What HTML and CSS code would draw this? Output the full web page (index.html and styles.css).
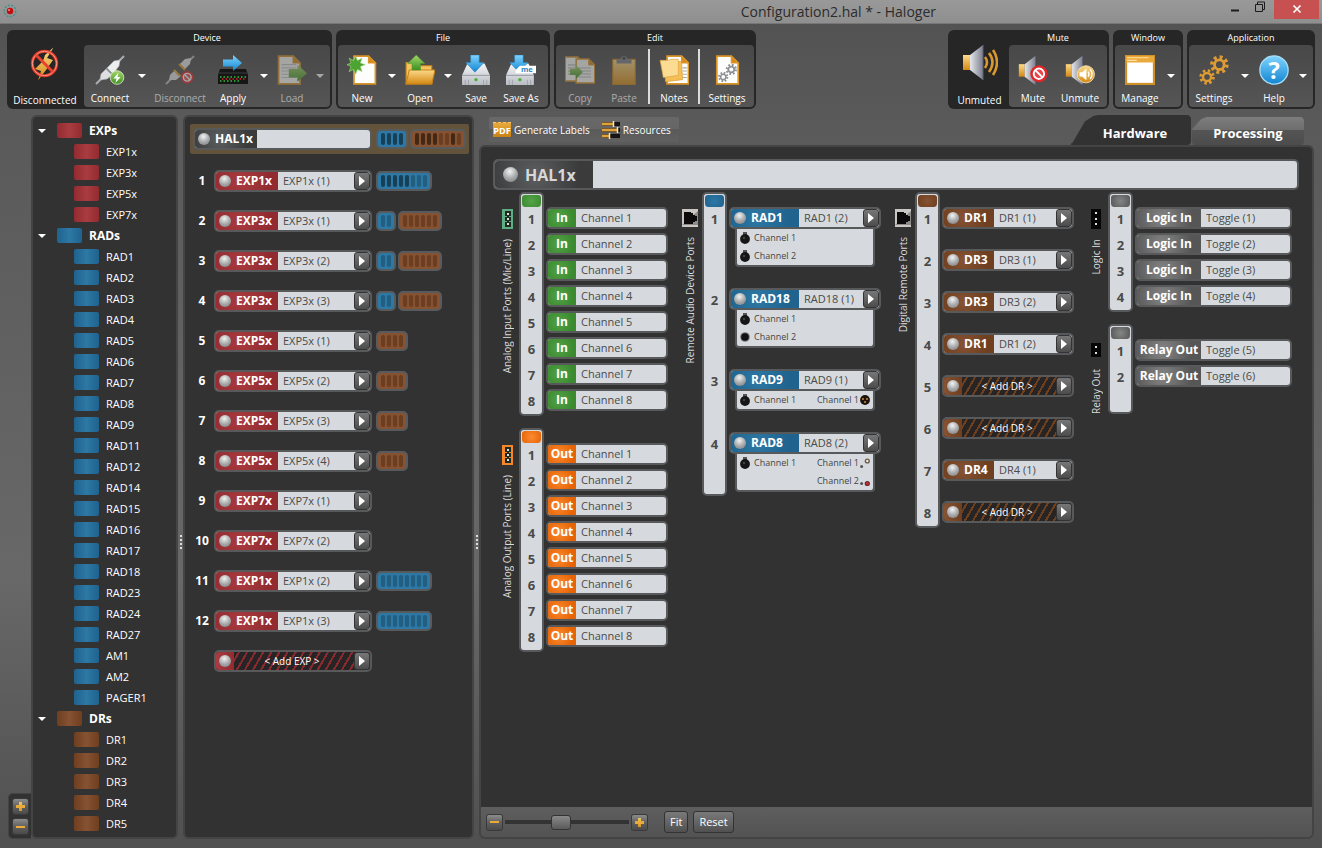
FILE: index.html
```html
<!DOCTYPE html>
<html lang="en">
<head>
<meta charset="utf-8">
<title>Configuration2.hal * - Haloger</title>
<link rel="stylesheet" href="styles.css">
</head>
<body>
<svg class="defs" width="0" height="0" aria-hidden="true">
  <defs>
    <linearGradient id="gBlue" x1="0" y1="0" x2="0" y2="1"><stop offset="0" stop-color="#7fd4ff"/><stop offset="1" stop-color="#1285d0"/></linearGradient>
    <linearGradient id="gGold" x1="0" y1="0" x2="0" y2="1"><stop offset="0" stop-color="#fbd98a"/><stop offset="1" stop-color="#d48a14"/></linearGradient>
    <linearGradient id="gGreen" x1="0" y1="0" x2="0" y2="1"><stop offset="0" stop-color="#a5d66b"/><stop offset="1" stop-color="#3f9022"/></linearGradient>
    <linearGradient id="gGrey" x1="0" y1="0" x2="1" y2="0"><stop offset="0" stop-color="#e6e7ec"/><stop offset="1" stop-color="#7b7e8c"/></linearGradient>
    <linearGradient id="gDrive" x1="0" y1="0" x2="0" y2="1"><stop offset="0" stop-color="#f4f5f7"/><stop offset="1" stop-color="#b9bdc4"/></linearGradient>
    <symbol id="doc" viewBox="0 0 28 28"><path d="M4.500 1H18l6.500 6.500V27H4.500z" fill="#fdfdfb" stroke="#d9942a" stroke-width="1.600"/><path d="M18 1v6.500h6.500z" fill="#d98a1a" stroke="#d9942a"/></symbol>
    <symbol id="no" viewBox="0 0 14 14"><circle cx="7" cy="7" r="6.600" fill="#e0262b"/><circle cx="7" cy="7" r="4" fill="#e8474a" stroke="#fff" stroke-width="1.500"/><path d="M4.200 4.200l5.600 5.600" stroke="#fff" stroke-width="1.500"/></symbol>
    <symbol id="gear" viewBox="0 0 16 16"><circle cx="8" cy="8" r="6.200" fill="none" stroke="currentColor" stroke-width="3" stroke-dasharray="2.430 2.440"/><circle cx="8" cy="8" r="4" fill="none" stroke="currentColor" stroke-width="2.400"/></symbol>
    <symbol id="off" viewBox="0 0 36 36"><path d="M26.500 1.500L20 12l6 2-7 10-8 10.500L14 25l-6-2 8-8 2-6z" fill="url(#gGold)"/><circle cx="17.500" cy="17.500" r="12.200" fill="none" stroke="#e23a2a" stroke-width="3"/><circle cx="17.500" cy="17.500" r="12.200" fill="none" stroke="#ff9a88" stroke-width="1"/><path d="M9 9l17 17" stroke="#e8412f" stroke-width="3"/></symbol>
    <symbol id="plug" viewBox="0 0 30 30"><path d="M1 29l7-7M22 8l7-7" stroke="#a9adb0" stroke-width="2"/><path d="M5 25l1-6 5-5 6 6-5 4z" fill="#dcdee0" stroke="#b4b7ba" stroke-width=".6"/><path d="M12 13l7-7 6-1-1 6-6 8z" fill="#eceded" stroke="#b4b7ba" stroke-width=".6"/><path d="M11 13l7 7" stroke="#8a8e92" stroke-width="1.200"/></symbol>
    <symbol id="connect" viewBox="0 0 30 30"><use href="#plug"/><circle cx="22" cy="22.500" r="6.800" fill="url(#gGreen)" stroke="#e2f2d2" stroke-width=".8"/><path d="M23.500 17.500l-5 6h3l-1 4.500 5-6h-3z" fill="#fff"/></symbol>
    <symbol id="disconnect" viewBox="0 0 30 30"><path d="M1 29L8 22M22 8l7-7" stroke="#b5b8bb" stroke-width="2"/><path d="M4 25l1-5 5-5 6 6-5 4z" fill="#e4e5e7"/><path d="M15 9l5-5 6-1-1 6-5 5z" fill="#e9eaeb"/><path d="M9 15l6 6M14 9l6 6" stroke="#e2a030" stroke-width="2"/><use href="#no" x="15.500" y="15.500" width="13.500" height="13.500"/></symbol>
    <symbol id="apply" viewBox="0 0 30 30"><path d="M2 14h26l2 6v9H0v-9z" fill="#161616"/><path d="M0 18h30" stroke="#3a3a3a"/><path d="M2 22h26M2 26h20" stroke="#31c13b" stroke-width="1.500" stroke-dasharray="1.500 2"/><path d="M4 24h24" stroke="#d22" stroke-width="1.500" stroke-dasharray="1.500 2"/><path d="M5 4.500h10V0l9 8-9 8v-4.500H5z" fill="url(#gBlue)"/></symbol>
    <symbol id="load" viewBox="0 0 28 28"><use href="#doc" x="-3" width="28" height="28"/><path d="M4 9h14M4 12h14M4 15h14M4 18h14M4 21h14" stroke="#c9c9c9"/><path d="M11 13h8V9l9 8-9 8v-4h-8z" fill="url(#gGreen)"/></symbol>
    <symbol id="new" viewBox="0 0 28 28"><use href="#doc" x="2" width="28" height="28"/><path d="M8 1l1.800 4.200L14 3l-1.500 4.500L17 9l-4.500 1.800L14 15.500l-4.200-2L8 18l-1.800-4.500L2 15.500l1.800-4.700L0 9l3.800-1.500L2 3l4.200 2.200z" fill="#4da32f" stroke="#a3d87b" stroke-width=".6"/></symbol>
    <symbol id="open" viewBox="0 0 28 28"><path d="M1 27V7h7l3 3h14v17z" fill="#f3c462" stroke="#c98216"/><path d="M1 27l3-13h24l-3 13z" fill="url(#gGold)" stroke="#c98216"/><path d="M10.500 0l8 8h-4v6h-8V8h-4z" fill="url(#gGreen)" stroke="#4f9a30" stroke-width=".5"/></symbol>
    <symbol id="save" viewBox="0 0 28 28"><path d="M6 8h16l5 11v9H1v-9z" fill="url(#gDrive)"/><path d="M1 19h26" stroke="#9a9ea5"/><path d="M4 28v-5M7 28v-5M21 28v-5M24 28v-5" stroke="#a4a8ae"/><circle cx="14" cy="23" r="1.600" fill="#48b236"/><path d="M9 0h8v7h4.500L13 16 4.500 7H9z" fill="url(#gBlue)" stroke="#2c83bf" stroke-width=".5"/></symbol>
    <symbol id="saveas" viewBox="0 0 28 28"><use href="#save" width="28" height="28" x="-1"/><path d="M9 14l4-4h15v7H9z" fill="#fff"/><text x="14" y="16" class="tiny">me</text></symbol>
    <symbol id="copy" viewBox="0 0 30 28"><use href="#doc" x="-4" y="0" width="26" height="26"/><path d="M3 9h8M3 12h8M3 15h8M3 18h8" stroke="#aaa"/><use href="#doc" x="7" y="2" width="26" height="26"/><path d="M14 12h12M14 15h12M14 18h12M14 21h12" stroke="#bbb"/><path d="M5 13h6V9l7 7-7 7v-4H5z" fill="url(#gGreen)"/></symbol>
    <symbol id="paste" viewBox="0 0 28 28"><rect x="3.500" y="4" width="21" height="23.500" fill="url(#gGold)" stroke="#c98216"/><path d="M7 8V4h4a3 3 0 0 1 6 0h4v4z" fill="#7d8287"/><circle cx="14" cy="3" r="1.500" fill="#444"/></symbol>
    <symbol id="notes" viewBox="0 0 28 28"><use href="#doc" x="3" width="28" height="28"/><path d="M22 12h4M22 15h4M22 18h4M22 21h4" stroke="#aaa"/><path d="M5 7l16-1 1 17-16 2z" fill="#f5bf55" stroke="#d59a33" stroke-width=".6"/><path d="M1 5h8l2-1h7v15L4 21z" fill="#fbdc92" stroke="#d9a243" stroke-width=".6"/></symbol>
    <symbol id="docset" viewBox="0 0 28 28"><use href="#doc" width="28" height="28"/><g color="#8d9196"><use href="#gear" x="5.500" y="15.500" width="10" height="10"/><use href="#gear" x="12.500" y="8" width="11" height="11"/></g></symbol>
    <symbol id="spk" viewBox="0 0 36 36"><rect x="1" y="11" width="7" height="15" fill="url(#gGold)"/><path d="M8 11L21 1v35L8 26z" fill="url(#gGrey)"/><path d="M21 1v35" stroke="#5f6170"/></symbol>
    <symbol id="unmuted" viewBox="0 0 36 36"><use href="#spk" width="36" height="36"/><path d="M23 13q4 5 0 11M27 9q7 9 0 19M31 6q8 12 0 25" fill="none" stroke="#d9982e" stroke-width="2.600"/></symbol>
    <symbol id="mute" viewBox="0 0 28 28"><use href="#spk" width="28" height="28"/><use href="#no" x="11" y="9" width="17" height="17"/></symbol>
    <symbol id="unmute" viewBox="0 0 28 28"><use href="#spk" width="28" height="28"/><circle cx="19.500" cy="18" r="8" fill="url(#gGold)" stroke="#f8e2b5" stroke-width=".8"/><path d="M13.500 16h2.500l4-3.500v11L16 20h-2.500z" fill="#fff"/><path d="M21.500 15.500q2 2.500 0 5M23.500 13.500q3.500 4.500 0 9" fill="none" stroke="#fff" stroke-width="1.200"/></symbol>
    <symbol id="window" viewBox="0 0 28 28"><rect x="1" y="1" width="26" height="26" fill="#fff" stroke="#cf9028" stroke-width="2"/><path d="M1 1h26v6H1z" fill="#eba93a"/><path d="M2 2.500h20M2 5h9" stroke="#ffe0a3"/></symbol>
    <symbol id="gears" viewBox="0 0 28 28"><g color="#dd9b33"><use href="#gear" x="10" y="0" width="18" height="18"/><use href="#gear" x="0" y="13" width="15" height="15"/></g></symbol>
    <symbol id="help" viewBox="0 0 28 28"><circle cx="14" cy="14" r="13.200" fill="url(#gBlue)" stroke="#a8def9" stroke-width="1.200"/><text x="14" y="22" text-anchor="middle" class="qmark">?</text></symbol>
    <symbol id="res" viewBox="0 0 18 18"><path d="M0 3h18M0 9h18M0 15h18" stroke="#151515" stroke-width="4"/><path d="M0 3h11M0 9h15M0 15h7" stroke="#e0a23a" stroke-width="3"/><path d="M11.500 0v6M15.500 6v6M7.500 12v6" stroke="#f4e3c0" stroke-width="1.500"/></symbol>
    <symbol id="rj" viewBox="0 0 16 18"><rect width="16" height="18" fill="#c9c6c4"/><path d="M0 16L16 2v14z" fill="#8e8a88"/><path d="M2 3h7v1h2v2h2v1h2v5h-2v1h-2v2H2z" fill="#0c0a0b"/></symbol>
    <symbol id="term3" viewBox="0 0 11 20"><rect x="1" y="1" width="9" height="18" fill="currentColor" stroke="currentColor" stroke-width="2"/><path d="M3 2h6v16H3z" fill="#1c2a20"/><g fill="#ddd"><rect x="5" y="4" width="2" height="2"/><rect x="5" y="9" width="2" height="2"/><rect x="5" y="14" width="2" height="2"/></g><path d="M3 7.500h2M7 7.500h2M3 12.500h2M7 12.500h2" stroke="currentColor"/></symbol>
    <symbol id="blk3" viewBox="0 0 10 20"><rect width="10" height="20" fill="#050505"/><g fill="#ddd"><rect x="4" y="3" width="2" height="2"/><rect x="4" y="9" width="2" height="2"/><rect x="4" y="14" width="2" height="2"/></g></symbol>
    <symbol id="blk2" viewBox="0 0 10 14"><rect width="10" height="14" fill="#050505"/><g fill="#ddd"><rect x="4" y="3" width="2" height="2"/><rect x="4" y="9" width="2" height="2"/></g></symbol>
    <symbol id="mic" viewBox="0 0 10 12"><rect x="3" width="4" height="3" fill="#555"/><circle cx="5" cy="7" r="4.900" fill="#161616"/><circle cx="4" cy="6" r="1.200" fill="#444"/></symbol>
    <symbol id="jack" viewBox="0 0 10 12"><circle cx="5" cy="6" r="4.800" fill="#777"/><circle cx="5" cy="6" r="3.800" fill="#111"/></symbol>
    <symbol id="xlr" viewBox="0 0 10 12"><circle cx="5" cy="6" r="4.900" fill="#1b120c"/><g fill="#e09a40"><circle cx="3" cy="5" r=".9"/><circle cx="7" cy="5" r=".9"/><circle cx="5" cy="8" r=".9"/></g></symbol>
    <symbol id="rcaw" viewBox="0 0 10 12"><circle cx="1.600" cy="9.500" r="1.500" fill="#555"/><circle cx="7.300" cy="4" r="2.600" fill="#6b5a4a"/><circle cx="7.300" cy="4" r="1.200" fill="#f3ece0"/></symbol>
    <symbol id="rcar" viewBox="0 0 10 12"><circle cx="1.600" cy="8.500" r="1.500" fill="#555"/><circle cx="7.300" cy="8.500" r="2.600" fill="#5a3030"/><circle cx="7.300" cy="8.500" r="1.500" fill="#d3262b"/></symbol>
  </defs>
</svg>

<header class="titlebar">
  <svg class="app-icon" viewBox="0 0 14 14"><circle cx="7" cy="7" r="5.800" fill="none" stroke="#3d8f8c" stroke-width="1.200" stroke-dasharray="2 1.500"/><circle cx="7" cy="7" r="3.200" fill="#c00e0e"/><circle cx="6" cy="6" r="1" fill="#ff8a80"/></svg>
  <h1 class="title">Configuration2.hal * - Haloger</h1>
  <button class="win" aria-label="Minimize"><svg width="10" height="12"><path d="M1 9.500h8" stroke="#1c1c1c" stroke-width="2"/></svg></button>
  <button class="win" aria-label="Restore"><svg width="12" height="12"><path d="M1.500 3.500h7v7h-7zM3.500 3V1h7v7.500H9" fill="none" stroke="#1c1c1c"/></svg></button>
  <button class="win win-close" aria-label="Close"><svg width="10" height="10"><path d="M1.500 1.500l7 7M8.500 1.500l-7 7" stroke="#fff" stroke-width="1.700"/></svg></button>
</header>

<nav class="toolbar">
  <section class="group">
    <div class="status"><svg><use href="#off"/></svg>Disconnected</div>
    <div class="group-main"><h2>Device</h2><div class="tools">
      <button class="tool w48"><svg><use href="#connect"/></svg>Connect</button><button class="drop" aria-label="Connect options"></button>
      <button class="tool w60" disabled><svg><use href="#disconnect"/></svg>Disconnect</button>
      <button class="tool w46"><svg><use href="#apply"/></svg>Apply</button><button class="drop" aria-label="Apply options"></button>
      <button class="tool w40" disabled><svg><use href="#load"/></svg>Load</button><button class="drop" aria-label="Load options" disabled></button>
    </div></div>
  </section>
  <section class="group"><div class="group-main"><h2>File</h2><div class="tools">
    <button class="tool w44"><svg><use href="#new"/></svg>New</button><button class="drop" aria-label="New options"></button>
    <button class="tool w40"><svg><use href="#open"/></svg>Open</button><button class="drop" aria-label="Open options"></button>
    <button class="tool w40"><svg><use href="#save"/></svg>Save</button>
    <button class="tool w50"><svg><use href="#saveas"/></svg>Save As</button>
  </div></div></section>
  <section class="group"><div class="group-main"><h2>Edit</h2><div class="tools">
    <button class="tool w44" disabled><svg><use href="#copy"/></svg>Copy</button>
    <button class="tool w44" disabled><svg><use href="#paste"/></svg>Paste</button>
    <span class="sep"></span>
    <button class="tool w44"><svg><use href="#notes"/></svg>Notes</button>
    <span class="sep"></span>
    <button class="tool w50"><svg><use href="#docset"/></svg>Settings</button>
  </div></div></section>
  <section class="group push">
    <div class="status status-mute"><svg><use href="#unmuted"/></svg>Unmuted</div>
    <div class="group-main"><h2>Mute</h2><div class="tools">
      <button class="tool w44"><svg><use href="#mute"/></svg>Mute</button>
      <button class="tool w50"><svg><use href="#unmute"/></svg>Unmute</button>
    </div></div>
  </section>
  <section class="group"><div class="group-main"><h2>Window</h2><div class="tools">
    <button class="tool w46"><svg><use href="#window"/></svg>Manage</button><button class="drop" aria-label="Window options"></button>
  </div></div></section>
  <section class="group"><div class="group-main"><h2>Application</h2><div class="tools">
    <button class="tool w46"><svg><use href="#gears"/></svg>Settings</button><button class="drop" aria-label="Settings options"></button>
    <button class="tool w42"><svg><use href="#help"/></svg>Help</button><button class="drop" aria-label="Help options"></button>
  </div></div></section>
</nav>

<main class="work">
  <div class="zoomtab">
    <button class="mini" aria-label="Expand all"><span class="plus"></span></button>
    <button class="mini" aria-label="Collapse all"><span class="minus"></span></button>
  </div>
  <aside class="panel tree">
    <details open class="red"><summary>EXPs</summary><ul><li>EXP1x</li><li>EXP3x</li><li>EXP5x</li><li>EXP7x</li></ul></details>
    <details open class="blue"><summary>RADs</summary><ul><li>RAD1</li><li>RAD2</li><li>RAD3</li><li>RAD4</li><li>RAD5</li><li>RAD6</li><li>RAD7</li><li>RAD8</li><li>RAD9</li><li>RAD11</li><li>RAD12</li><li>RAD14</li><li>RAD15</li><li>RAD16</li><li>RAD17</li><li>RAD18</li><li>RAD23</li><li>RAD24</li><li>RAD27</li><li>AM1</li><li>AM2</li><li>PAGER1</li></ul></details>
    <details open class="brown"><summary>DRs</summary><ul><li>DR1</li><li>DR2</li><li>DR3</li><li>DR4</li><li>DR5</li></ul></details>
  </aside>
  <div class="splitter"><i></i><i></i><i></i><i></i></div>

  <section class="panel devices">
    <div class="hal-row">
      <div class="pill dark"><label><b class="tag ball">HAL1x</b><input value=""></label></div>
      <span class="meter blue"><i class="on"></i><i class="on"></i><i class="on"></i><i class="on"></i></span>
      <span class="meter brown"><i class="on"></i><i class="on"></i><i class="on"></i><i class="on"></i><i></i><i></i><i class="on"></i><i></i></span>
    </div>
    <ol class="exps">
      <li><b class="num">1</b><div class="pill red"><label><b class="tag ball">EXP1x</b><input value="EXP1x (1)"></label><button class="go" aria-label="Open"></button></div><span class="meter blue"><i class="on"></i><i class="on"></i><i class="on"></i><i class="on"></i><i class="on"></i><i></i><i></i><i></i></span></li>
      <li><b class="num">2</b><div class="pill red"><label><b class="tag ball">EXP3x</b><input value="EXP3x (1)"></label><button class="go" aria-label="Open"></button></div><span class="meter blue"><i></i><i></i></span><span class="meter brown"><i></i><i></i><i></i><i></i><i></i><i></i></span></li>
      <li><b class="num">3</b><div class="pill red"><label><b class="tag ball">EXP3x</b><input value="EXP3x (2)"></label><button class="go" aria-label="Open"></button></div><span class="meter blue"><i></i><i></i></span><span class="meter brown"><i></i><i></i><i></i><i></i><i></i><i></i></span></li>
      <li><b class="num">4</b><div class="pill red"><label><b class="tag ball">EXP3x</b><input value="EXP3x (3)"></label><button class="go" aria-label="Open"></button></div><span class="meter blue"><i></i><i></i></span><span class="meter brown"><i></i><i></i><i></i><i></i><i></i><i></i></span></li>
      <li><b class="num">5</b><div class="pill red"><label><b class="tag ball">EXP5x</b><input value="EXP5x (1)"></label><button class="go" aria-label="Open"></button></div><span class="meter brown"><i></i><i></i><i></i><i></i></span></li>
      <li><b class="num">6</b><div class="pill red"><label><b class="tag ball">EXP5x</b><input value="EXP5x (2)"></label><button class="go" aria-label="Open"></button></div><span class="meter brown"><i></i><i></i><i></i><i></i></span></li>
      <li><b class="num">7</b><div class="pill red"><label><b class="tag ball">EXP5x</b><input value="EXP5x (3)"></label><button class="go" aria-label="Open"></button></div><span class="meter brown"><i></i><i></i><i></i><i></i></span></li>
      <li><b class="num">8</b><div class="pill red"><label><b class="tag ball">EXP5x</b><input value="EXP5x (4)"></label><button class="go" aria-label="Open"></button></div><span class="meter brown"><i></i><i></i><i></i><i></i></span></li>
      <li><b class="num">9</b><div class="pill red"><label><b class="tag ball">EXP7x</b><input value="EXP7x (1)"></label><button class="go" aria-label="Open"></button></div></li>
      <li><b class="num">10</b><div class="pill red"><label><b class="tag ball">EXP7x</b><input value="EXP7x (2)"></label><button class="go" aria-label="Open"></button></div></li>
      <li><b class="num">11</b><div class="pill red"><label><b class="tag ball">EXP1x</b><input value="EXP1x (2)"></label><button class="go" aria-label="Open"></button></div><span class="meter blue"><i></i><i></i><i></i><i></i><i></i><i></i><i></i><i></i></span></li>
      <li><b class="num">12</b><div class="pill red"><label><b class="tag ball">EXP1x</b><input value="EXP1x (3)"></label><button class="go" aria-label="Open"></button></div><span class="meter blue"><i></i><i></i><i></i><i></i><i></i><i></i><i></i><i></i></span></li>
      <li><b class="num"></b><div class="pill red add"><button class="adder ball">&lt; Add EXP &gt;</button><button class="go" aria-label="Choose EXP"></button></div></li>
    </ol>
  </section>
  <div class="splitter"><i></i><i></i><i></i><i></i></div>

  <section class="right">
    <div class="right-head">
      <div class="actions">
        <button><span class="pdf">PDF</span>Generate Labels</button>
        <button><svg width="18" height="18"><use href="#res"/></svg>Resources</button>
      </div>
      <div class="tabs" role="tablist">
        <button class="tab tab-on" role="tab" aria-selected="true">Hardware</button>
        <button class="tab" role="tab">Processing</button>
      </div>
    </div>
    <div class="panel hardware">
      <div class="canvas">
        <div class="pill dark hal-big"><label><b class="tag ball">HAL1x</b><input value=""></label></div>
        <div class="columns">
          <div class="stack">
            <section class="ports green">
              <div class="side"><svg class="t3 tgreen"><use href="#term3"/></svg><h3>Analog Input Ports (Mic/Line)</h3></div>
              <ol class="strip"><li>1</li><li>2</li><li>3</li><li>4</li><li>5</li><li>6</li><li>7</li><li>8</li></ol>
              <div class="rows chan">
                <div class="pill"><label><b class="tag">In</b><input value="Channel 1"></label></div>
                <div class="pill"><label><b class="tag">In</b><input value="Channel 2"></label></div>
                <div class="pill"><label><b class="tag">In</b><input value="Channel 3"></label></div>
                <div class="pill"><label><b class="tag">In</b><input value="Channel 4"></label></div>
                <div class="pill"><label><b class="tag">In</b><input value="Channel 5"></label></div>
                <div class="pill"><label><b class="tag">In</b><input value="Channel 6"></label></div>
                <div class="pill"><label><b class="tag">In</b><input value="Channel 7"></label></div>
                <div class="pill"><label><b class="tag">In</b><input value="Channel 8"></label></div>
              </div>
            </section>
            <section class="ports orange">
              <div class="side"><svg class="t3 torange"><use href="#term3"/></svg><h3>Analog Output Ports (Line)</h3></div>
              <ol class="strip"><li>1</li><li>2</li><li>3</li><li>4</li><li>5</li><li>6</li><li>7</li><li>8</li></ol>
              <div class="rows chan">
                <div class="pill"><label><b class="tag">Out</b><input value="Channel 1"></label></div>
                <div class="pill"><label><b class="tag">Out</b><input value="Channel 2"></label></div>
                <div class="pill"><label><b class="tag">Out</b><input value="Channel 3"></label></div>
                <div class="pill"><label><b class="tag">Out</b><input value="Channel 4"></label></div>
                <div class="pill"><label><b class="tag">Out</b><input value="Channel 5"></label></div>
                <div class="pill"><label><b class="tag">Out</b><input value="Channel 6"></label></div>
                <div class="pill"><label><b class="tag">Out</b><input value="Channel 7"></label></div>
                <div class="pill"><label><b class="tag">Out</b><input value="Channel 8"></label></div>
              </div>
            </section>
          </div>

          <section class="ports blue">
            <div class="side"><svg class="rj"><use href="#rj"/></svg><h3>Remote Audio Device Ports</h3></div>
            <ol class="strip"><li class="h81">1</li><li class="h81">2</li><li class="h63">3</li><li class="h63">4</li></ol>
            <div class="rows rads">
              <div><div class="pill"><label><b class="tag ball">RAD1</b><input value="RAD1 (2)"></label><button class="go" aria-label="Open"></button></div>
                <ul class="chs"><li><svg><use href="#mic"/></svg>Channel 1</li><li><svg><use href="#mic"/></svg>Channel 2</li></ul></div>
              <div><div class="pill"><label><b class="tag ball">RAD18</b><input value="RAD18 (1)"></label><button class="go" aria-label="Open"></button></div>
                <ul class="chs"><li><svg><use href="#mic"/></svg>Channel 1</li><li><svg><use href="#jack"/></svg>Channel 2</li></ul></div>
              <div><div class="pill"><label><b class="tag ball">RAD9</b><input value="RAD9 (1)"></label><button class="go" aria-label="Open"></button></div>
                <ul class="chs"><li><svg><use href="#mic"/></svg>Channel 1<span class="out">Channel 1<svg><use href="#xlr"/></svg></span></li></ul></div>
              <div><div class="pill"><label><b class="tag ball">RAD8</b><input value="RAD8 (2)"></label><button class="go" aria-label="Open"></button></div>
                <ul class="chs"><li><svg><use href="#mic"/></svg>Channel 1<span class="out">Channel 1<svg><use href="#rcaw"/></svg></span></li><li><span class="out">Channel 2<svg><use href="#rcar"/></svg></span></li></ul></div>
            </div>
          </section>

          <section class="ports brown">
            <div class="side"><svg class="rj"><use href="#rj"/></svg><h3>Digital Remote Ports</h3></div>
            <ol class="strip"><li class="h42">1</li><li class="h42">2</li><li class="h42">3</li><li class="h42">4</li><li class="h42">5</li><li class="h42">6</li><li class="h42">7</li><li>8</li></ol>
            <div class="rows drs">
              <div class="pill"><label><b class="tag ball">DR1</b><input value="DR1 (1)"></label><button class="go" aria-label="Open"></button></div>
              <div class="pill"><label><b class="tag ball">DR3</b><input value="DR3 (1)"></label><button class="go" aria-label="Open"></button></div>
              <div class="pill"><label><b class="tag ball">DR3</b><input value="DR3 (2)"></label><button class="go" aria-label="Open"></button></div>
              <div class="pill"><label><b class="tag ball">DR1</b><input value="DR1 (2)"></label><button class="go" aria-label="Open"></button></div>
              <div class="pill add"><button class="adder ball">&lt; Add DR &gt;</button><button class="go" aria-label="Choose DR"></button></div>
              <div class="pill add"><button class="adder ball">&lt; Add DR &gt;</button><button class="go" aria-label="Choose DR"></button></div>
              <div class="pill"><label><b class="tag ball">DR4</b><input value="DR4 (1)"></label><button class="go" aria-label="Open"></button></div>
              <div class="pill add"><button class="adder ball">&lt; Add DR &gt;</button><button class="go" aria-label="Choose DR"></button></div>
            </div>
          </section>

          <div class="stack">
            <section class="ports grey">
              <div class="side"><svg class="b3"><use href="#blk3"/></svg><h3>Logic In</h3></div>
              <ol class="strip"><li>1</li><li>2</li><li>3</li><li>4</li></ol>
              <div class="rows logic">
                <div class="pill"><label><b class="tag">Logic In</b><input value="Toggle (1)"></label></div>
                <div class="pill"><label><b class="tag">Logic In</b><input value="Toggle (2)"></label></div>
                <div class="pill"><label><b class="tag">Logic In</b><input value="Toggle (3)"></label></div>
                <div class="pill"><label><b class="tag">Logic In</b><input value="Toggle (4)"></label></div>
              </div>
            </section>
            <section class="ports grey">
              <div class="side side-low"><svg class="b2"><use href="#blk2"/></svg><h3>Relay Out</h3></div>
              <ol class="strip"><li>1</li><li>2</li></ol>
              <div class="rows logic">
                <div class="pill"><label><b class="tag">Relay Out</b><input value="Toggle (5)"></label></div>
                <div class="pill"><label><b class="tag">Relay Out</b><input value="Toggle (6)"></label></div>
              </div>
            </section>
          </div>
        </div>
      </div>
      <footer class="zoombar">
        <button class="mini" aria-label="Zoom out"><span class="minus"></span></button>
        <input type="range" min="0" max="100" value="44" aria-label="Zoom">
        <button class="mini" aria-label="Zoom in"><span class="plus"></span></button>
        <button class="btn btn-fit">Fit</button>
        <button class="btn">Reset</button>
      </footer>
    </div>
  </section>
</main>
</body>
</html>
```
FILE: styles.css
```css
* { box-sizing: border-box; }
body {
  margin: 0;
  min-height: 100vh;
  display: flex;
  flex-direction: column;
  font: 11px/16px "Open Sans", "Noto Sans", sans-serif;
  color: #fff;
  background: linear-gradient(#515151, #5a5a5a 15%, #686868 68%, #505050);
}
button, input { font: inherit; color: inherit; margin: 0; padding: 0; border: 0; background: none; }
ul, ol { margin: 0; padding: 0; list-style: none; }
h1, h2, h3 { margin: 0; font-weight: 400; }
.defs { position: absolute; }
.tiny { font: 700 7px "Open Sans", sans-serif; fill: #2b86c6; }
.qmark { font: 700 22px "Open Sans", sans-serif; fill: #fff; }

.red { --c1: #a93c40; --c2: #922b30; --hatch: #8a2a30; }
.blue { --c1: #2d78a5; --c2: #1f638e; --slot: #215e80; --slot-on: #154058; }
.brown { --c1: #865232; --c2: #6e3f20; --slot: #6b3e21; --slot-on: #432814; --hatch: #70401c; }
.green { --c1: #55a348; --c2: #3b8a2f; }
.orange { --c1: #fb8a30; --c2: #e66406; }
.grey { --c1: #858585; --c2: #565656; }
.dark { --c1: #5c5e60; --c2: #3b3b3b; }

.titlebar {
  height: 24px;
  display: flex;
  align-items: flex-start;
  padding: 0 3px;
  background: linear-gradient(#999, #8f8f8f);
  border-bottom: 1px solid #777;
}
.app-icon { width: 14px; height: 14px; margin: 4px 0 0; }
.title { margin: 0 286px 0 auto; font-size: 14px; line-height: 23px; color: #2c2c2c; }
.win { width: 25px; height: 18px; }
.win-close { width: 45px; height: 19px; background: #c75050; margin-left: 2px; }

.toolbar { display: flex; gap: 4px; padding: 6px 7px; }
.push { margin-left: auto; }
.group { display: flex; height: 79px; padding: 0 2px 2px; border-radius: 6px; background: #262626; }
.group h2 { font-size: 9px; line-height: 15px; text-align: center; }
.tools {
  display: flex;
  align-items: flex-start;
  height: 62px;
  padding: 0 2px;
  background: linear-gradient(#484848, #555);
  border-radius: 4px;
}
.status, .tool { display: flex; flex-direction: column; align-items: center; font-size: 10px; line-height: 14px; white-space: nowrap; }
.status { width: 75px; padding: 16px 3px 0 0; }
.status-mute { width: 59px; padding: 14px 0 0; }
.status svg { width: 36px; height: 36px; margin-bottom: 11px; }
.status-mute svg { margin-bottom: 13px; }
.tool { padding-top: 10px; }
.tool svg { width: 30px; height: 30px; margin-bottom: 6px; }
.tool:disabled, .drop:disabled { opacity: .5; }
.w40 { width: 40px; } .w42 { width: 42px; } .w44 { width: 44px; } .w46 { width: 46px; }
.w48 { width: 48px; } .w50 { width: 50px; } .w60 { width: 60px; }
.drop { width: 16px; height: 62px; display: grid; place-items: center; }
.drop::before, summary::before { content: ""; border: 4px solid transparent; border-top-color: #fff; border-bottom: 0; }
.sep { width: 2px; height: 55px; margin: 4px 2px 0; background: #dcdcdc; }

.work { flex: 1; display: flex; padding: 0 8px 9px; }
.panel { background: #323232; border: 2px solid #444; border-radius: 6px; }
.zoomtab {
  align-self: flex-end;
  width: 23px;
  padding: 5px 3px 4px 4px;
  display: grid;
  gap: 5px;
  background: #323232;
  border: 1px solid #444;
  border-right: 0;
  border-radius: 5px 0 0 5px;
}
.mini {
  width: 15px; height: 15px;
  display: grid; place-items: center;
  border-radius: 2px;
  background: linear-gradient(#8c8c8c, #606060 50%, #4a4a4a);
  box-shadow: 0 0 0 1px #3a3a3a;
}
.plus, .minus { width: 9px; height: 9px; background: linear-gradient(#e8ab3c, #e8ab3c) center / 9px 2px no-repeat; }
.plus { background: linear-gradient(#e8ab3c, #e8ab3c) center / 9px 3px no-repeat, linear-gradient(#f3c466, #d9951f) center / 3px 9px no-repeat; }
.tree { width: 147px; padding: 3px 0 0 5px; }
summary { display: flex; align-items: center; height: 21px; font-size: 12px; font-weight: 700; list-style: none; }
summary::after, .tree li::before {
  content: ""; width: 25px; height: 15px; margin-right: 7px; border-radius: 2px;
  background: linear-gradient(90deg, var(--c2), var(--c1) 50%, var(--c2));
}
summary::after { order: -1; }
summary::before { order: -2; margin-right: 11px; }
.tree li { display: flex; align-items: center; height: 21px; padding-left: 36px; }
.splitter { width: 5px; display: flex; flex-direction: column; align-items: center; justify-content: center; gap: 2px; padding-top: 130px; }
.splitter i { width: 2px; height: 2px; background: #ddd; }

.devices { width: 291px; padding: 7px 3px 7px 5px; }
.hal-row { display: flex; align-items: center; gap: 4px; height: 30px; padding: 0 3px; margin-bottom: 16px; background: #62533a; border-radius: 2px; }
.hal-row .pill { width: 179px; }
.hal-row .meter + .meter { margin-left: -2px; }
.exps { display: grid; gap: 18px; }
.exps li { display: flex; align-items: center; }
.exps .pill { width: 158px; margin-right: 4px; }
.num { width: 24px; font-size: 12px; text-align: center; }
.meter { display: flex; gap: 2px; height: 20px; padding: 2px 3px; margin-right: 2px; border: 2px solid #575b5e; border-radius: 5px; background: var(--c1); }
.hal-row .meter { margin-right: 0; }
.meter i { width: 4px; height: 12px; border-radius: 2px; background: var(--slot); }
.meter .on { background: var(--slot-on); }

.pill { display: flex; height: 22px; border: 2px solid #58595b; border-radius: 5px; background: #d6dade; overflow: hidden; }
.pill label { flex: 1; display: flex; min-width: 0; }
.pill input { flex: 1; min-width: 0; padding-left: 5px; color: #4a4a4a; }
.tag {
  flex: none; width: 62px; font-size: 12px; line-height: 18px; text-align: center;
  background: radial-gradient(circle at 40% 50%, var(--c1), var(--c2) 75%);
}
.ball { display: flex; align-items: center; padding-left: 3px; }
.ball::before {
  content: ""; flex: none; width: 12px; height: 12px; margin-right: 5px; border-radius: 50%;
  background: radial-gradient(circle at 45% 30%, #f2f2f2, #a9abad 50%, #777);
}
.go {
  flex: none; width: 16px; height: 18px; display: grid; place-items: center;
  border: 1px solid #333; border-radius: 3px;
  background: linear-gradient(#777, #4c4c4c);
}
.go::before { content: ""; border: 5px solid transparent; border-left: 6px solid #fff; border-right: 0; }
.add { background: repeating-linear-gradient(120deg, #262424 0 5px, var(--hatch) 5px 7px); }
.adder { flex: 1; background: linear-gradient(90deg, var(--c1), var(--c2)) left / 18px 100% no-repeat; justify-content: center; font-size: 10px; }
.adder::before { margin-right: auto; }
.adder::after { content: ""; width: 1px; margin-left: auto; }

.right { flex: 1; min-width: 0; display: flex; flex-direction: column; }
.right-head { display: flex; justify-content: space-between; align-items: flex-end; height: 30px; padding: 0 10px; }
.actions { display: flex; gap: 12px; height: 25px; padding: 0 8px 0 4px; margin-bottom: 3px; background: linear-gradient(#686868, #666 50%, #5a5a5a 50%, #606060); border-radius: 2px; }
.actions button { display: flex; align-items: center; gap: 3px; font-size: 10px; }
.pdf { width: 18px; padding-top: 1px; font-size: 9px; line-height: 13px; font-weight: 700; text-align: center; background: linear-gradient(#e8a93c, #c98213); border-top: 1px dashed #f0c980; }
.tabs { display: flex; align-items: flex-end; height: 30px; gap: 1px; }
.tab {
  width: 112px; height: 28px; padding-top: 3px; font-size: 13px; font-weight: 700;
  background: linear-gradient(#7d7d7d, #6e6e6e 45%, #555 46%, #4c4c4c);
  border-radius: 4px;
  clip-path: polygon(0 100%, 0 45%, 8% 8%, 13% 0, 98% 0, 100% 8%, 100% 100%);
}
.tab-on {
  width: 122px; height: 30px; padding: 5px 0 0 10px;
  background: #323232;
  clip-path: polygon(0 100%, 3% 92%, 13% 22%, 20% 3%, 24% 0, 98% 0, 100% 8%, 100% 100%);
}
.hardware { flex: 1; display: flex; flex-direction: column; overflow: hidden; }
.canvas { flex: 1; padding: 12px 13px 0 12px; }
.hal-big { height: 31px; }
.hal-big .tag { width: 98px; padding-left: 8px; font-size: 16px; color: #d8d8d8; }
.hal-big .ball::before { width: 15px; height: 15px; margin-right: 7px; }
.columns { display: flex; align-items: flex-start; gap: 12px; padding: 2px 0 0 4px; }
.stack { display: grid; gap: 12px; }
.ports { display: grid; grid-template-columns: 20px 25px auto; gap: 2px; }
.side { display: flex; flex-direction: column; align-items: center; gap: 10px; padding-top: 17px; }
.side-low { padding-top: 19px; gap: 12px; }
.side h3 { writing-mode: vertical-rl; transform: rotate(180deg); font-size: 10px; line-height: 14px; color: #dcdcdc; white-space: nowrap; }
.t3 { width: 11px; height: 20px; } .tgreen { color: #5fae83; } .torange { color: #f5862a; }
.rj { width: 16px; height: 18px; } .b3 { width: 10px; height: 20px; } .b2 { width: 10px; height: 14px; }
.strip { border: 2px solid #58595b; border-radius: 5px; background: #d6dade; color: #4a4a4a; font-size: 13px; font-weight: 700; line-height: 26px; text-align: center; }
.strip::before { content: ""; display: block; height: 12px; margin-bottom: -1px; border: 1px solid #d6dade; border-bottom: 0; border-radius: 4px; background: radial-gradient(circle, var(--c1), var(--c2)); }
.strip li { height: 26px; }
.strip .h81 { height: 81px; } .strip .h63 { height: 63px; } .strip .h42 { height: 42px; }
.rows { display: flex; flex-direction: column; gap: 4px; padding-top: 15px; }
.chan .pill { width: 122px; }
.chan .tag { width: 28px; }
.rads { gap: 21px; width: 152px; }
.rads .tag { width: 68px; }
.drs { gap: 20px; width: 132px; }
.drs .tag { width: 50px; }
.logic .pill { width: 157px; }
.logic .tag { width: 64px; }
.chs { margin: 0 6px; padding: 0 3px; border: 2px solid #58595b; border-top: 0; border-radius: 0 0 4px 4px; background: #d6dade; color: #444; font-size: 9px; line-height: 18px; }
.chs li { display: flex; align-items: center; height: 18px; }
.chs svg { width: 10px; height: 12px; margin-right: 4px; }
.out { display: flex; align-items: center; margin-left: auto; }
.out svg { margin: 0 0 0 1px; }

.zoombar { display: flex; align-items: center; height: 30px; padding-left: 6px; background: linear-gradient(#5e5e5e, #535353); }
.zoombar input { width: 124px; height: 16px; margin: 0 3px; appearance: none; background: linear-gradient(#333, #333) center / 100% 4px no-repeat; }
.zoombar input::-webkit-slider-thumb { appearance: none; width: 20px; height: 15px; border: 1px solid #333; border-radius: 3px; background: linear-gradient(#8a8a8a, #5a5a5a); }
.btn { height: 22px; padding: 0 5px; border: 1px solid #333; border-radius: 3px; background: linear-gradient(#7a7a7a, #505050); line-height: 20px; }
.btn-fit { margin: 0 5px 0 17px; }
```
